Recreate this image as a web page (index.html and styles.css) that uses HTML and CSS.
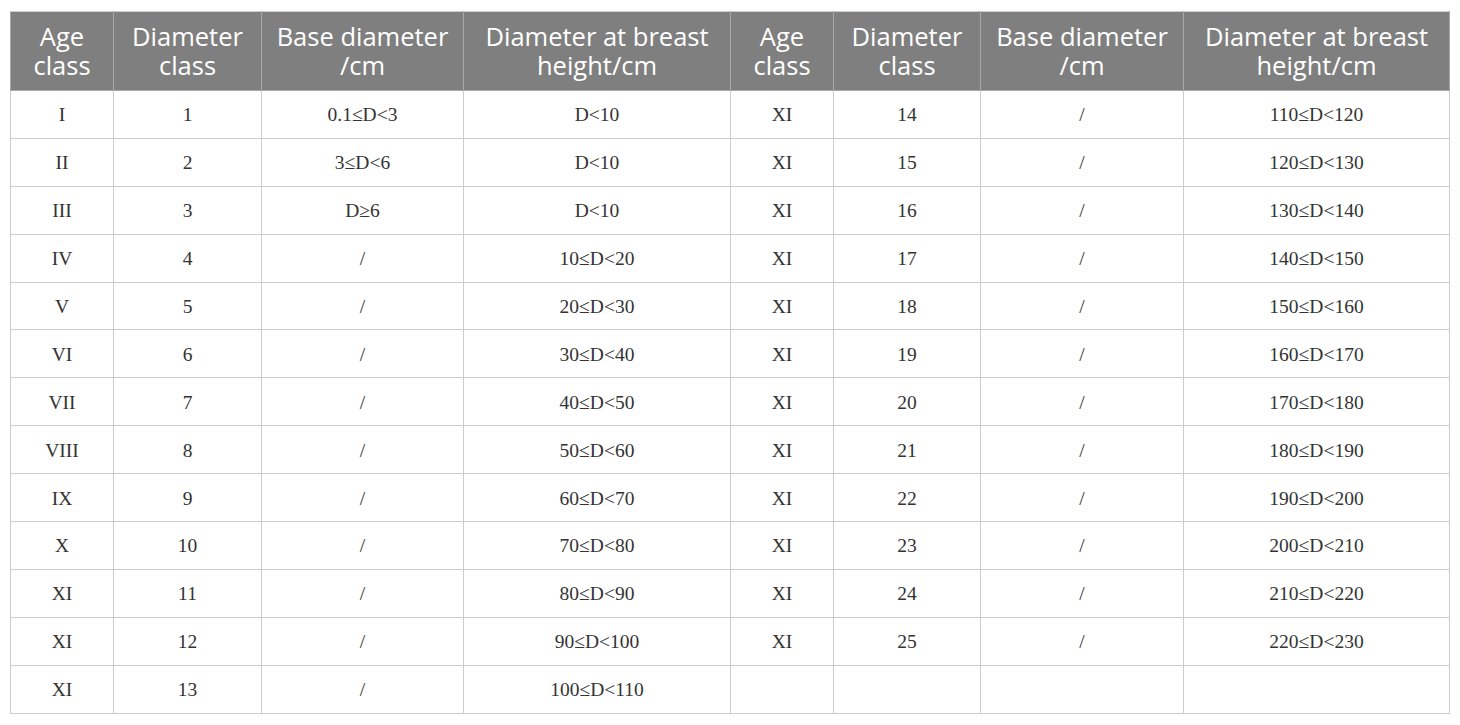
FILE: index.html
```html
<!DOCTYPE html>
<html>
<head>
<meta charset="utf-8">
<link rel="stylesheet" href="styles.css">
</head>
<body>
<table class="grid">
<colgroup>
<col class="c1"><col class="c2"><col class="c3"><col class="c4">
<col class="c1"><col class="c2b"><col class="c3b"><col class="c4b">
</colgroup>
<thead>
<tr>
<th>Age<br>class</th><th>Diameter<br>class</th><th>Base diameter<br>/cm</th><th>Diameter at breast<br>height/cm</th>
<th>Age<br>class</th><th>Diameter<br>class</th><th>Base diameter<br>/cm</th><th>Diameter at breast<br>height/cm</th>
</tr>
</thead>
<tbody>
<tr><td>I</td><td>1</td><td>0.1≤D&lt;3</td><td>D&lt;10</td><td>XI</td><td>14</td><td>/</td><td>110≤D&lt;120</td></tr>
<tr><td>II</td><td>2</td><td>3≤D&lt;6</td><td>D&lt;10</td><td>XI</td><td>15</td><td>/</td><td>120≤D&lt;130</td></tr>
<tr><td>III</td><td>3</td><td>D≥6</td><td>D&lt;10</td><td>XI</td><td>16</td><td>/</td><td>130≤D&lt;140</td></tr>
<tr><td>IV</td><td>4</td><td>/</td><td>10≤D&lt;20</td><td>XI</td><td>17</td><td>/</td><td>140≤D&lt;150</td></tr>
<tr><td>V</td><td>5</td><td>/</td><td>20≤D&lt;30</td><td>XI</td><td>18</td><td>/</td><td>150≤D&lt;160</td></tr>
<tr><td>VI</td><td>6</td><td>/</td><td>30≤D&lt;40</td><td>XI</td><td>19</td><td>/</td><td>160≤D&lt;170</td></tr>
<tr><td>VII</td><td>7</td><td>/</td><td>40≤D&lt;50</td><td>XI</td><td>20</td><td>/</td><td>170≤D&lt;180</td></tr>
<tr><td>VIII</td><td>8</td><td>/</td><td>50≤D&lt;60</td><td>XI</td><td>21</td><td>/</td><td>180≤D&lt;190</td></tr>
<tr><td>IX</td><td>9</td><td>/</td><td>60≤D&lt;70</td><td>XI</td><td>22</td><td>/</td><td>190≤D&lt;200</td></tr>
<tr><td>X</td><td>10</td><td>/</td><td>70≤D&lt;80</td><td>XI</td><td>23</td><td>/</td><td>200≤D&lt;210</td></tr>
<tr><td>XI</td><td>11</td><td>/</td><td>80≤D&lt;90</td><td>XI</td><td>24</td><td>/</td><td>210≤D&lt;220</td></tr>
<tr><td>XI</td><td>12</td><td>/</td><td>90≤D&lt;100</td><td>XI</td><td>25</td><td>/</td><td>220≤D&lt;230</td></tr>
<tr><td>XI</td><td>13</td><td>/</td><td>100≤D&lt;110</td><td></td><td></td><td></td><td></td></tr>
</tbody>
</table>
</body>
</html>
```
FILE: styles.css
```css
html, body {
  margin: 0;
  padding: 0;
  background: #ffffff;
}
body {
  padding: 11px 0 0 10px;
}
.grid {
  border-collapse: collapse;
  table-layout: fixed;
  width: 1439px;
}
.c1 { width: 103px; }
.c2 { width: 148px; }
.c3 { width: 202px; }
.c4 { width: 267px; }
.c2b { width: 147px; }
.c3b { width: 203px; }
.c4b { width: 266px; }
.grid th {
  background: #7f7f7f;
  color: #ffffff;
  font-family: "Open Sans", "Noto Sans", sans-serif;
  font-weight: 400;
  font-size: 25.5px;
  line-height: 29px;
  height: 78px;
  padding: 0;
  text-align: center;
  vertical-align: middle;
  border: 1px solid #a8a8a8;
  border-top-color: #d0d0d0;
}
.grid td {
  font-family: "Liberation Serif", "Times New Roman", serif;
  font-size: 19.5px;
  color: #333333;
  text-align: center;
  vertical-align: middle;
  height: 44.9px;
  padding: 2px 0 0;
  border: 1px solid #cccccc;
}
```
